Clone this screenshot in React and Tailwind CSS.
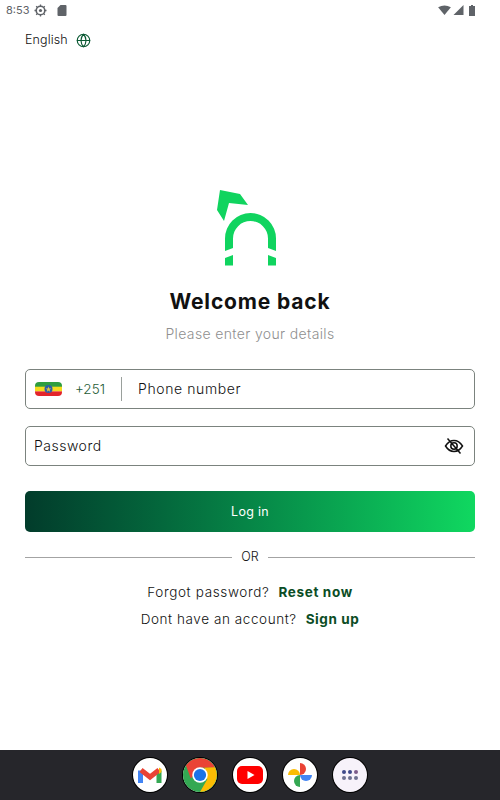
import React from 'react';
import { Globe } from 'lucide-react';

const StatusBar = () => (
  <div className="h-5 flex items-center justify-between pl-[6px] pr-[25px] text-[#5f6368] text-[11px] font-normal">
    <div className="flex items-center gap-[5px]">
      <span>8:53</span>
      <svg width="13" height="13" viewBox="0 0 13 13" fill="none" stroke="#5f6368">
        <circle cx="6.5" cy="6.5" r="4.3" strokeWidth="1.6" />
        <circle cx="6.5" cy="6.5" r="1.6" fill="#5f6368" stroke="none" />
        <path d="M6.5 0.5v2M6.5 10.5v2M0.5 6.5h2M10.5 6.5h2M2.2 2.2l1.4 1.4M9.4 9.4l1.4 1.4M2.2 10.8l1.4-1.4M9.4 3.6l1.4-1.4" strokeWidth="1.3" />
      </svg>
      <svg className="ml-[5px]" width="10" height="12" viewBox="0 0 10 12" fill="#5f6368">
        <path d="M3.5 1H8.5a1 1 0 0 1 1 1v9a1 1 0 0 1-1 1H1.5a1 1 0 0 1-1-1V4z" />
      </svg>
    </div>
    <div className="flex items-center gap-[2px]">
      <svg width="13" height="10" viewBox="0 0 14 11" fill="#5f6368"><path d="M0 2.5Q7-1.5 14 2.5L7 11z" /></svg>
      <svg width="11" height="10" viewBox="0 0 11 11" fill="#5f6368"><path d="M11 0V11H0z" /></svg>
      <svg className="ml-[3px]" width="6" height="11" viewBox="0 0 6 11" fill="#5f6368"><path d="M2 0h2v1h2v10H0V1h2z" /></svg>
    </div>
  </div>
);

const Logo = () => (
  <svg width="70" height="80" viewBox="215 188 70 80" fill="#10d45f">
    <path d="M220 190L240 194L248 205L229 203L224 221L217 210z" />
    <path d="M225 251V238.500A25.500 25.500 0 0 1 276 238.500V251L268 248V238.500A17.500 17.500 0 0 0 233 238.500V248z" />
    <path d="M225 258L233 255V265.500H225zM276 258L268 255V265.500H276z" />
  </svg>
);

const Flag = () => (
  <svg width="27" height="14" viewBox="0 0 27 14">
    <defs>
      <clipPath id="flag-clip"><rect width="27" height="14" rx="4" /></clipPath>
    </defs>
    <g clipPath="url(#flag-clip)">
      <rect width="27" height="5" fill="#2f9e3f" />
      <rect y="4.700" width="27" height="4.800" fill="#f5dc1e" />
      <rect y="9.400" width="27" height="4.600" fill="#e3242b" />
      <circle cx="13.500" cy="7" r="4" fill="#2d5fa8" />
      <path d="M13.500 4.500l.7 2h2l-1.600 1.200.6 2-1.700-1.200-1.700 1.200.6-2-1.600-1.200h2z" fill="#e2c93c" />
    </g>
  </svg>
);

const EyeOff = () => (
  <svg width="20" height="20" viewBox="0 0 20 20" fill="none" stroke="#111" strokeWidth="1.500">
    <path d="M1.500 10C4 6 7 4.500 10 4.500S16 6 18.500 10C16 14 13 15.500 10 15.500S4 14 1.500 10z" />
    <circle cx="10" cy="10" r="3.200" />
    <path d="M3.500 2.500L16.500 17.500" />
  </svg>
);

const DockIcon = ({ children }) => (
  <div className="w-[34px] h-[34px] rounded-full bg-white flex items-center justify-center ring-1 ring-black overflow-hidden">
    {children}
  </div>
);

const Dock = () => (
  <div className="mt-auto h-[50px] bg-[#26262b] flex items-center justify-center gap-[16px]">
    <DockIcon>
      <svg width="24" height="18" viewBox="0 0 24 18" fill="none">
        <path d="M1 17V4.500" stroke="#4285f4" strokeWidth="5" transform="translate(1.500 0)" />
        <path d="M21 17V4.500" stroke="#34a853" strokeWidth="5" />
        <path d="M3 4L12 11L21 4" stroke="#ea4335" strokeWidth="5" />
        <path d="M21 1.500L23.500 3V6L21 8z" fill="#fbbc04" />
      </svg>
    </DockIcon>
    <DockIcon>
      <svg width="34" height="34" viewBox="0 0 35 35">
        <rect width="35" height="35" fill="#34a853" />
        <path d="M17.500 0A17.500 17.500 0 0 1 33 10H17.500L8 21L3 7.500A17.500 17.500 0 0 1 17.500 0z" fill="#ea4335" />
        <path d="M33 9.500A17.500 17.500 0 0 1 17.500 35L25 22L22 10z" fill="#fbbc04" />
        <circle cx="17.500" cy="17.500" r="8" fill="#fff" />
        <circle cx="17.500" cy="17.500" r="6.300" fill="#1a73e8" />
      </svg>
    </DockIcon>
    <DockIcon>
      <svg width="26" height="18" viewBox="0 0 26 18">
        <rect width="26" height="18" rx="5" fill="#f00" />
        <path d="M10.500 5L17.500 9L10.500 13z" fill="#fff" />
      </svg>
    </DockIcon>
    <DockIcon>
      <svg width="26" height="26" viewBox="0 0 26 26">
        <path d="M13 13V1A6 6 0 0 1 13 13z" fill="#ea4335" />
        <path d="M13 13H25A6 6 0 0 1 13 13z" fill="#4285f4" />
        <path d="M13 13V25A6 6 0 0 1 13 13z" fill="#34a853" />
        <path d="M13 13H1A6 6 0 0 1 13 13z" fill="#fbbc04" />
      </svg>
    </DockIcon>
    <div className="w-[34px] h-[34px] rounded-full bg-[#f7f2fa] ring-1 ring-black grid grid-cols-3 gap-[1.500px] place-content-center justify-items-center px-[8.500px]">
      {['#3f4a8a', '#3f4a8a', '#7d5c8a', '#6e7190', '#6e7190', '#6e7190'].map((c, i) => (
        <span key={i} className="w-[4.500px] h-[4.500px] rounded-full" style={{ background: c }} />
      ))}
    </div>
  </div>
);

export default function App() {
  return (
    <div className="w-[500px] h-[800px] bg-white flex flex-col font-['Inter',sans-serif] font-light overflow-hidden">
      <StatusBar />

      <div className="mt-[11px] ml-[25px] flex items-center gap-[8px] text-[12.500px] text-[#111] tracking-[0.1px] h-[18px]">
        <span>English</span>
        <Globe size={15} color="#0b5a34" strokeWidth={1.800} />
      </div>

      <div className="mt-[139px] flex justify-center">
        <Logo />
      </div>

      <h1 className="mt-[19px] text-center text-[21px] leading-[30px] font-bold text-[#111] tracking-[0.85px]">Welcome back</h1>
      <p className="mt-[7px] text-center text-[14px] leading-[20px] text-[#8f8f8f] tracking-[0.36px]">Please enter your details</p>

      <div className="mx-[25px] mt-[25px] h-[40px] border border-[#7b837e] rounded-[5px] flex items-center pl-[9px]">
        <Flag />
        <span className="ml-[13px] w-[46px] text-[13.500px] text-[#1f5c36]">+251</span>
        <span className="w-px h-[24px] bg-[#9aa09c]" />
        <span className="ml-[16px] pb-[2px] text-[14px] text-[#111] tracking-[0.6px]">Phone number</span>
      </div>

      <div className="mx-[25px] mt-[17px] h-[40px] border border-[#7b837e] rounded-[5px] flex items-center justify-between pl-[8px] pr-[10px]">
        <span className="pb-[2px] text-[14px] text-[#111] tracking-[0.5px]">Password</span>
        <EyeOff />
      </div>

      <button className="mx-[25px] mt-[25px] h-[41px] pt-[2px] rounded-[5px] bg-gradient-to-r from-[#023c2b] to-[#10d860] text-white text-[12.500px] font-normal tracking-[0.3px]">
        Log in
      </button>

      <div className="mx-[25px] mt-[16px] h-[18px] flex items-center gap-[9px] text-[12.500px] text-[#111]">
        <span className="flex-1 h-px bg-[#a3a3a3]" />
        <span className="pt-[1px]">OR</span>
        <span className="flex-1 h-px bg-[#a3a3a3]" />
      </div>

      <div className="mt-[16px] flex justify-center gap-[9px] text-[13.500px] leading-[20px] text-[#111] tracking-[0.65px]">
        <span>Forgot password?</span>
        <span className="font-bold text-[#0b4d25]">Reset now</span>
      </div>
      <div className="mt-[7px] flex justify-center gap-[9px] text-[13.500px] leading-[20px] text-[#111] tracking-[0.58px]">
        <span>Dont have an account?</span>
        <span className="font-bold text-[#0b4d25]">Sign up</span>
      </div>

      <Dock />
    </div>
  );
}
